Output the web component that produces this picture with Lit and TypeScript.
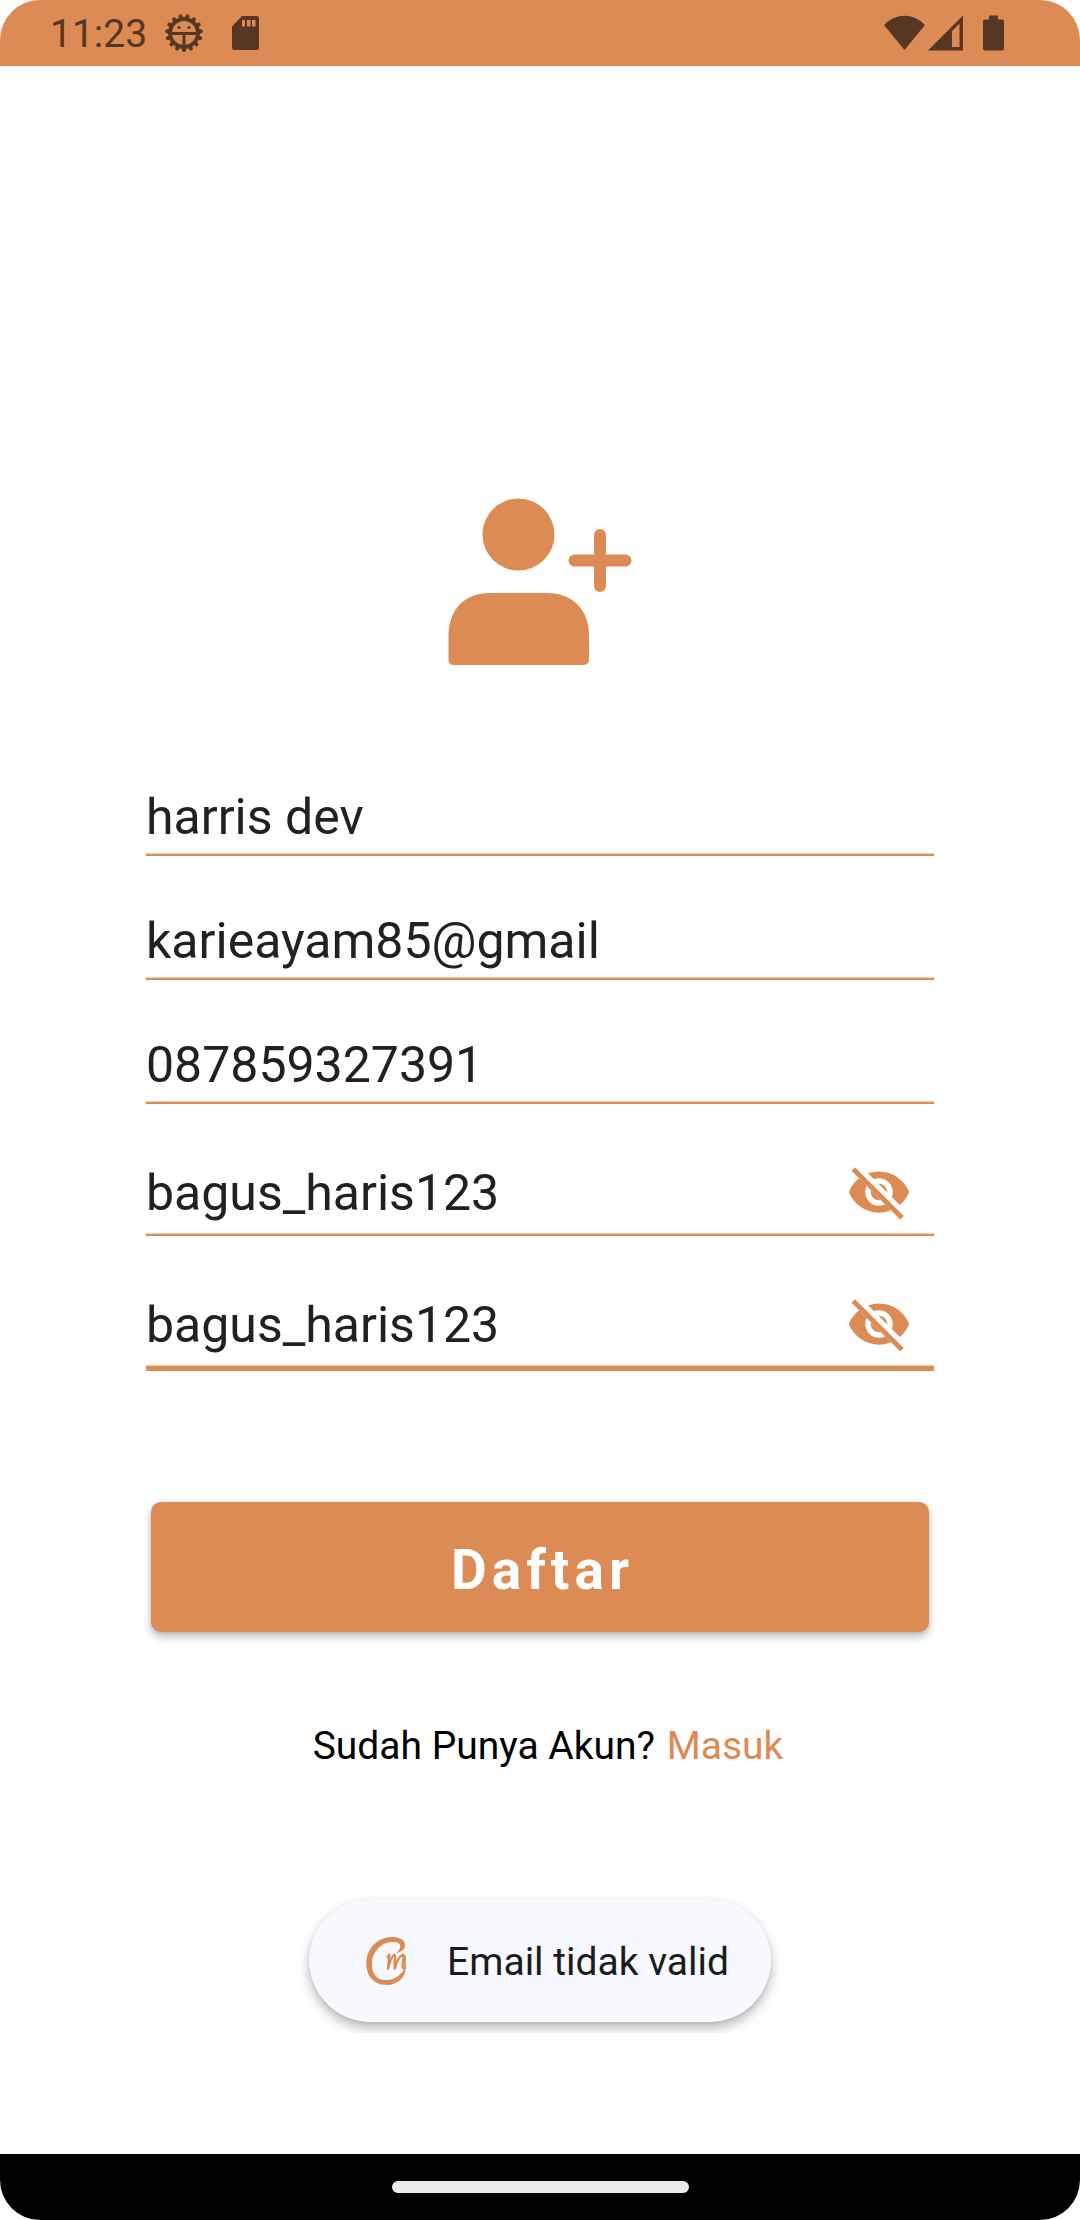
import { LitElement, html, svg, css } from "lit";
import { customElement, property, state } from "lit/decorators.js";

const GEAR_TEETH = Array.from({ length: 15 }, (_, i) => 90 + i * 24);

@customElement("status-bar")
export class StatusBar extends LitElement {
  static styles = css`
    :host {
      display: block;
    }
    .bar {
      display: flex;
      align-items: center;
      justify-content: space-between;
      height: 66px;
      padding: 0 76px 0 50px;
      border-radius: 40px 40px 0 0;
      background: #dc8b55;
      color: #573623;
    }
    .group {
      display: flex;
      align-items: center;
    }
    .time {
      margin-right: 17px;
      padding-top: 2px;
      font-size: 39px;
      line-height: 48px;
    }
    .gear {
      margin-right: 28px;
    }
    .signal {
      margin: 0 20px 0 3px;
    }
    svg {
      display: block;
      fill: currentColor;
    }
    .hole {
      fill: #dc8b55;
    }
    .line {
      fill: none;
      stroke: currentColor;
      stroke-width: 3;
    }
    .tooth {
      stroke: currentColor;
      stroke-width: 4;
      stroke-linecap: round;
    }
  `;

  render() {
    return html`
      <header class="bar">
        <div class="group">
          <time class="time">11:23</time>
          <svg class="gear" width="40" height="40" viewBox="-20 -20 40 40" aria-hidden="true">
            ${GEAR_TEETH.map(
              (a) => svg`<line class="tooth" x1="0" y1="0" x2="4" y2="0" transform="rotate(${a}) translate(13 0)"></line>`
            )}
            <circle r="16"></circle>
            <circle class="hole" r="12"></circle>
            <path class="line" d="M-14 0.5H14M0 0.5V14"></path>
            <circle cx="-5" cy="-5.5" r="1.6"></circle>
            <circle cx="5" cy="-5.5" r="1.6"></circle>
          </svg>
          <svg width="27" height="34" viewBox="0 0 27 34" aria-hidden="true">
            <path d="M10 0H24.5Q27 0 27 2.500V31.500Q27 34 24.500 34H2.500Q0 34 0 31.500V10.500Z"></path>
            <path class="hole" d="M10 4h3v6.500h-3zM15 4h3.500v6.500H15zM20 4h3.500v6.500H20z"></path>
          </svg>
        </div>
        <div class="group">
          <svg width="41" height="36" viewBox="0 0 41 36" aria-hidden="true">
            <path d="M0 10Q9 .8 20.500 .8T41 10L20.500 35Z"></path>
          </svg>
          <svg class="signal" width="35" height="36" viewBox="0 0 35 36" aria-hidden="true">
            <path fill-rule="evenodd" d="M0 35.500L35 .5V35.500ZM24 16V32H31.500V8.500Z"></path>
          </svg>
          <svg width="21" height="36" viewBox="0 0 21 36" aria-hidden="true">
            <path d="M6 .5H15V4.500H19Q21 4.500 21 6.500V33.500Q21 35.500 19 35.500H2Q0 35.500 0 33.500V6.500Q0 4.500 2 4.500H6Z"></path>
          </svg>
        </div>
      </header>
    `;
  }
}

@customElement("form-field")
export class FormField extends LitElement {
  @property() label = "";
  @property() value = "";
  @property() type = "text";
  @property({ type: Boolean }) toggle = false;
  @property({ type: Boolean }) active = false;
  @state() private hiddenText = false;

  static styles = css`
    :host {
      display: block;
    }
    .field {
      display: flex;
      align-items: center;
      padding-bottom: 7px;
      border-bottom: 2px solid #dc8b55;
      box-shadow: inset 0 -1px #eccdb8;
    }
    .secret {
      padding: 0 22px 9px 0;
    }
    .active {
      border-bottom-width: 5px;
    }
    .input {
      flex: 1;
      min-width: 0;
      height: 60px;
      padding: 0;
      border: 0;
      outline: 0;
      background: none;
      color: #212121;
      font: 50px/60px Roboto, sans-serif;
    }
    .secret .input {
      padding-top: 2px;
    }
    .eye {
      width: 66px;
      height: 66px;
      padding: 0;
      border: 0;
      background: none;
      color: #dc8b55;
      cursor: pointer;
    }
    svg {
      display: block;
      fill: currentColor;
    }
    .strike {
      stroke: currentColor;
      stroke-width: 1.8;
      stroke-linecap: square;
    }
  `;

  render() {
    return html`
      <div class="field ${this.toggle ? "secret" : ""} ${this.active ? "active" : ""}">
        <input
          class="input"
          aria-label=${this.label}
          type=${this.hiddenText ? "password" : this.type}
          .value=${this.value}
          spellcheck="false"
        />
        ${this.toggle
          ? html`<button
              class="eye"
              type="button"
              aria-label="Tampilkan atau sembunyikan kata sandi"
              @click=${() => (this.hiddenText = !this.hiddenText)}
            >
              <svg width="66" height="66" viewBox="0 0 24 24" aria-hidden="true">
                <defs>
                  <clipPath id="cut">
                    <path d="M2 4.270L19.460 21.730L22 19.190L4.540 1.730V1H23V23H1V4.270Z"></path>
                  </clipPath>
                </defs>
                <path
                  clip-path="url(#cut)"
                  d="M12 4.500C7 4.500 2.730 7.610 1 12c1.730 4.390 6 7.500 11 7.500s9.270-3.110 11-7.500c-1.730-4.390-6-7.500-11-7.500zM12 17c-2.760 0-5-2.240-5-5s2.240-5 5-5 5 2.240 5 5-2.240 5-5 5zM12 9c-1.660 0-3 1.340-3 3s1.340 3 3 3 3-1.340 3-3-1.340-3-3-3z"
                ></path>
                <path class="strike" d="M3.270 4.270L19.740 20.740"></path>
              </svg>
            </button>`
          : null}
      </div>
    `;
  }
}

@customElement("toast-message")
export class ToastMessage extends LitElement {
  static styles = css`
    :host {
      display: block;
    }
    .toast {
      display: flex;
      align-items: center;
      gap: 41px;
      height: 123px;
      padding: 0 42px 0 57px;
      box-sizing: border-box;
      border-radius: 62px;
      background: #f8f9fe;
      color: #1a1c20;
      font-size: 39px;
      line-height: 48px;
      white-space: nowrap;
      box-shadow: 0 6px 12px rgba(0, 0, 0, 0.28), 0 1px 3px rgba(0, 0, 0, 0.08);
      clip-path: inset(-20px -20px -11px -20px);
    }
    .text {
      padding-top: 2px;
    }
    svg {
      display: block;
      fill: #dc8b55;
    }
    .script {
      fill: none;
      stroke: #dc8b55;
      stroke-width: 7;
      stroke-linecap: round;
      stroke-linejoin: round;
    }
  `;

  render() {
    return html`
      <div class="toast" role="status">
        <svg width="40" height="48" viewBox="0 0 120 146" aria-hidden="true">
          <path
            d="M90 49C106 46 118 37 118 25C118 8 100 0 78 0C36 0 0 34 0 80C0 122 26 146 62 146C96 146 120 122 120 92V56L114 54V100C100 120 82 131 58 131C34 131 17 114 17 82C17 44 46 15 80 15C94 15 103 19 103 28C103 37 98 43 90 49Z"
          ></path>
          <path class="script" d="M65 60L70 54L66 97C70 76 79 56 86 54C90 58 84 80 87 96C92 76 102 58 110 54C116 54 112 72 110 86Q110 98 116 94"></path>
        </svg>
        <span class="text">Email tidak valid</span>
      </div>
    `;
  }
}

@customElement("app-root")
export class AppRoot extends LitElement {
  static styles = css`
    :host {
      display: block;
      font-family: Roboto, sans-serif;
      background: #fff;
    }
    .screen {
      display: flex;
      flex-direction: column;
      min-height: 100vh;
    }
    .main {
      position: relative;
      display: flex;
      flex: 1;
      flex-direction: column;
      align-items: center;
      padding: 414px 146px 264px;
    }
    .avatar {
      display: block;
      margin-bottom: 107px;
      fill: #dc8b55;
    }
    .plus {
      stroke: #dc8b55;
      stroke-width: 12;
      stroke-linecap: round;
    }
    .form {
      display: flex;
      flex-direction: column;
      gap: 55px;
      width: 100%;
    }
    .submit {
      height: 130px;
      margin: 76px 5px 0;
      padding: 6px 0 0 5px;
      border: 0;
      border-radius: 10px;
      background: #dc8b55;
      color: #fff;
      font: 700 55px/64px Roboto, sans-serif;
      letter-spacing: 5px;
      cursor: pointer;
      box-shadow: 0 5px 10px rgba(0, 0, 0, 0.24), 0 1px 4px rgba(0, 0, 0, 0.12);
    }
    .login {
      margin: 90px 0 0;
      padding-left: 16px;
      color: #000;
      font-size: 39px;
      line-height: 48px;
    }
    .link {
      margin-left: 2px;
      color: #dc8b55;
      text-decoration: none;
    }
    .toast {
      position: absolute;
      bottom: 132px;
      left: 50%;
      transform: translateX(-50%);
    }
    .nav {
      display: flex;
      align-items: center;
      justify-content: center;
      height: 66px;
      border-radius: 0 0 40px 40px;
      background: #000;
    }
    .handle {
      width: 297px;
      height: 12px;
      border-radius: 6px;
      background: #ebebeb;
    }
  `;

  render() {
    return html`
      <div class="screen">
        <status-bar></status-bar>
        <main class="main">
          <svg class="avatar" width="200" height="200" viewBox="0 0 200 200" aria-hidden="true">
            <circle cx="78.500" cy="54.500" r="36"></circle>
            <path d="M8.500 156C8.500 130 24 113 50 113H107C133 113 149 130 149 156V179Q149 185 143 185H14Q8.500 185 8.500 179Z"></path>
            <path class="plus" d="M134.500 80.500H185.500M160 55V106"></path>
          </svg>
          <form class="form" @submit=${(e: Event) => e.preventDefault()}>
            <form-field label="Nama" value="harris dev"></form-field>
            <form-field label="Email" value="karieayam85@gmail"></form-field>
            <form-field label="Nomor telepon" type="tel" value="087859327391"></form-field>
            <form-field label="Kata sandi" value="bagus_haris123" toggle></form-field>
            <form-field label="Ulangi kata sandi" value="bagus_haris123" toggle active></form-field>
            <button class="submit" type="submit">Daftar</button>
          </form>
          <p class="login">Sudah Punya Akun? <a class="link" href="#masuk">Masuk</a></p>
          <toast-message class="toast"></toast-message>
        </main>
        <footer class="nav"><div class="handle"></div></footer>
      </div>
    `;
  }
}
